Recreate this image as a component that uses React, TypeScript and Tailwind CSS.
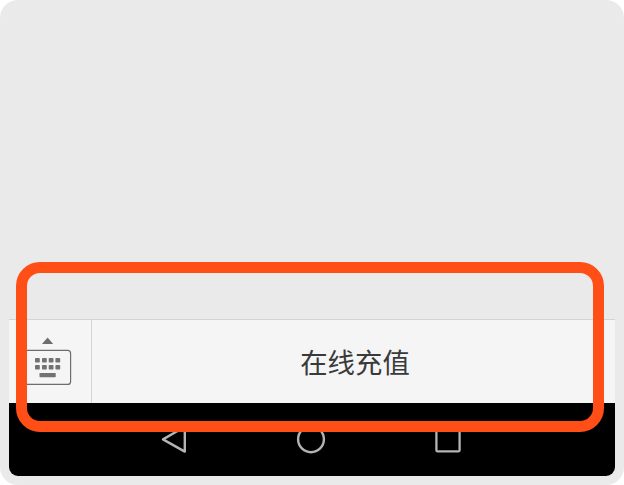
function KeyboardIcon() {
  return (
    <svg width="48" height="48" viewBox="0 0 48 48" fill="none">
      <path d="M18 7 L23.6 0.4 L29.2 7 Z" fill="#6e6e6e" />
      <rect x="0.6" y="13.4" width="46" height="34" rx="3" stroke="#6e6e6e" strokeWidth="1.2" />
      {[11, 18, 24.7, 31.4].map((x) =>
        [21, 28].map((y) => (
          <rect key={`${x}-${y}`} x={x} y={y} width="4.8" height="4.6" rx="0.8" fill="#727272" />
        )),
      )}
      <rect x="15.5" y="36" width="16.2" height="4.2" rx="0.6" fill="#727272" />
    </svg>
  );
}

function SystemBar() {
  return (
    <div className="flex h-[73px] shrink-0 items-start rounded-b-[9px] bg-black pt-[22px] pl-[151px]">
      <svg width="28" height="30" viewBox="0 0 28 30" fill="none">
        <path d="M3 14.4 L24.8 1.8 V26.6 Z" stroke="#b4b4b4" strokeWidth="2.4" strokeLinejoin="round" />
      </svg>
      <svg className="ml-[108px]" width="30" height="30" viewBox="0 0 30 30" fill="none">
        <circle cx="15" cy="14.3" r="12.9" stroke="#b4b4b4" strokeWidth="2.4" />
      </svg>
      <svg className="ml-[108px]" width="28" height="30" viewBox="0 0 28 30" fill="none">
        <rect x="2.4" y="3" width="23.2" height="23.3" rx="1" stroke="#b4b4b4" strokeWidth="2.3" />
      </svg>
    </div>
  );
}

export default function App() {
  return (
    <div className="h-[485px] w-[624px] overflow-hidden bg-white">
      <div className="relative flex h-full flex-col rounded-[18px] bg-[#eaeaea] px-[9px] pb-[9px]">
        <div className="flex-1" />
        <div className="flex h-[84px] shrink-0 border-t border-[#d4d4d4] bg-[#f5f5f5]">
          <div className="flex w-[83px] items-start border-r border-[#d4d4d4] pt-[17px] pl-[15px]">
            <KeyboardIcon />
          </div>
          <button className="flex-1 pt-px pl-[3px] font-['Noto_Sans_CJK_SC',sans-serif] text-[27.4px] leading-none text-[#3a3a3a]">
            在线充值
          </button>
        </div>
        <SystemBar />
        <div className="pointer-events-none absolute top-[262px] left-4 h-[170px] w-[588px] rounded-[24px] border-[11px] border-[#ff4f17]" />
      </div>
    </div>
  );
}
